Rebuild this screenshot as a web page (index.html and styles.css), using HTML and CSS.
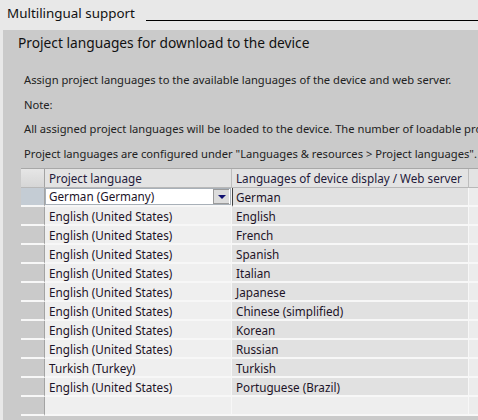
FILE: index.html
```html
<!DOCTYPE html>
<html>
<head>
<meta charset="utf-8">
<link rel="stylesheet" href="styles.css">
</head>
<body>
<div class="top">
  <span class="title">Multilingual support</span>
  <span class="rule"></span>
</div>
<div class="panel">
  <div class="heading">Project languages for download to the device</div>
  <div class="texts">
    <p>Assign project languages to the available languages of the device and web server.</p>
    <p>Note:</p>
    <p>All assigned project languages will be loaded to the device. The number of loadable project languages is limited.</p>
    <p>Project languages are configured under "Languages &amp; resources &gt; Project languages".</p>
  </div>
  <div class="table">
    <div class="rh hdr"></div>
    <div class="c1 hdr">Project language</div>
    <div class="c2 hdr">Languages of device display / Web server</div>
    <div class="c3 hdr"></div>

    <div class="rh sel"></div>
    <div class="c1 edit"><div class="combo"><span>German (Germany)</span><span class="btn"><span class="tri"></span></span></div></div>
    <div class="c2 mark">German</div>
    <div class="c3"></div>

    <div class="rh"></div><div class="c1">English (United States)</div><div class="c2">English</div><div class="c3"></div>
    <div class="rh"></div><div class="c1">English (United States)</div><div class="c2">French</div><div class="c3"></div>
    <div class="rh"></div><div class="c1">English (United States)</div><div class="c2">Spanish</div><div class="c3"></div>
    <div class="rh"></div><div class="c1">English (United States)</div><div class="c2">Italian</div><div class="c3"></div>
    <div class="rh"></div><div class="c1">English (United States)</div><div class="c2">Japanese</div><div class="c3"></div>
    <div class="rh"></div><div class="c1">English (United States)</div><div class="c2">Chinese (simplified)</div><div class="c3"></div>
    <div class="rh"></div><div class="c1">English (United States)</div><div class="c2">Korean</div><div class="c3"></div>
    <div class="rh"></div><div class="c1">English (United States)</div><div class="c2">Russian</div><div class="c3"></div>
    <div class="rh"></div><div class="c1">Turkish (Turkey)</div><div class="c2">Turkish</div><div class="c3"></div>
    <div class="rh"></div><div class="c1">English (United States)</div><div class="c2">Portuguese (Brazil)</div><div class="c3"></div>
    <div class="rh"></div><div class="c1 empty"></div><div class="c2 empty"></div><div class="c3 empty"></div>
  </div>
</div>
</body>
</html>
```

FILE: styles.css
```css
html, body {
  margin: 0;
  padding: 0;
  width: 478px;
  height: 420px;
  overflow: hidden;
  background: #e8e8e8;
  font-family: "Noto Sans", "Open Sans", sans-serif;
  color: #1a1a1a;
}

.top {
  height: 30px;
  display: flex;
  align-items: flex-start;
  padding-left: 7px;
  background: #e8e8e8;
}

.title {
  font-size: 13.4px;
  line-height: 14px;
  margin-top: 6px;
  color: #111;
  white-space: nowrap;
}

.rule {
  flex: 1;
  margin-left: 11px;
  margin-top: 20px;
  height: 1px;
  background: #000;
}

.panel {
  margin-left: 3px;
  height: 390px;
  background: #cacaca;
  overflow: hidden;
  white-space: nowrap;
}

.heading {
  font-size: 13.75px;
  line-height: 16px;
  padding: 5px 0 0 15px;
  color: #111;
}

.texts {
  padding: 22px 0 0 21px;
  font-size: 11.2px;
}

.texts p {
  margin: 0;
  height: 24.5px;
  line-height: 14px;
  color: #222;
}

.table {
  margin-top: -3px;
  margin-left: 18px;
  width: 480px;
  display: grid;
  grid-template-columns: 24px 187px 237px 32px;
  font-size: 11.7px;
  border-top: 1px solid #a8a8a8;
}

.table > div {
  height: 16px;
  padding-top: 1px;
  line-height: 17px;
  border-bottom: 2px solid #f7f7f7;
  overflow: hidden;
}

.rh {
  background: #cacaca;
  border-right: 1px solid #a3a3a3;
}

.rh.sel {
  background: #c4ccd4;
}

.c1 {
  background: #efefef;
  padding-left: 4px;
  border-right: 1px solid #f7f7f7;
  color: #1d1428;
}

.c2 {
  background: #e1e1e1;
  padding-left: 4px;
  border-right: 1px solid #f7f7f7;
  color: #1d1428;
}

.c3 {
  background: #ececec;
}

.table > .hdr {
  background: #e3e3e3;
  border-bottom: 1px solid #b8b8b8;
  height: 17px;
  color: #241a3a;
}

.table > .rh.hdr {
  background: linear-gradient(#e6e6e6, #d6d6d6);
}

.c1.hdr, .c2.hdr {
  border-right: 1px solid #bdbdbd;
}

.table > .c1.edit {
  padding: 0;
  height: 17px;
  background: #ffffff;
}

.combo {
  height: 15px;
  line-height: 15px;
  border: 1px solid #a8b0b8;
  display: flex;
  align-items: center;
  justify-content: space-between;
  padding-left: 3px;
  background: #fff;
}

.btn {
  width: 15px;
  height: 13px;
  margin-right: 1px;
  background: #dcdcdc;
  border: 1px solid #9a9a9a;
  border-right: none;
  display: flex;
  align-items: center;
  justify-content: center;
}

.tri {
  width: 0;
  height: 0;
  border-left: 4px solid transparent;
  border-right: 4px solid transparent;
  border-top: 4px solid #101070;
}

.table > .c2.mark {
  border-left: 1px solid #404040;
  padding-left: 3px;
}

.table > .empty.c2 {
  background: #eeeeee;
}
```
